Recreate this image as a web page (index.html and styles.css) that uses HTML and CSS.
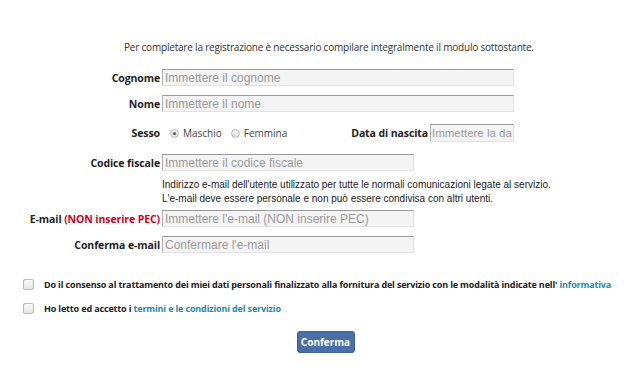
FILE: index.html
```html
<!DOCTYPE html>
<html lang="it">
<head>
<meta charset="utf-8">
<link rel="stylesheet" href="styles.css">
</head>
<body>
<div class="page">
  <p class="intro">Per completare la registrazione è necessario compilare integralmente il modulo sottostante.</p>
  <div class="form">
    <div class="row r-cognome">
      <label class="lbl">Cognome</label>
      <input class="inp w-long" placeholder="Immettere il cognome">
    </div>
    <div class="row r-nome">
      <label class="lbl">Nome</label>
      <input class="inp w-long" placeholder="Immettere il nome">
    </div>
    <div class="row r-sesso">
      <label class="lbl">Sesso</label>
      <div class="sexline">
        <span class="radio checked"></span><span class="rtext">Maschio</span>
        <span class="radio"></span><span class="rtext">Femmina</span>
        <span class="spacer"></span>
        <label class="lbl2">Data di nascita</label>
        <input class="inp w-date" placeholder="Immettere la data di nascita">
      </div>
    </div>
    <div class="row r-cf">
      <label class="lbl">Codice fiscale</label>
      <input class="inp w-mid" placeholder="Immettere il codice fiscale">
    </div>
    <div class="row r-help">
      <span></span>
      <div class="help">Indirizzo e-mail dell'utente utilizzato per tutte le normali comunicazioni legate al servizio.<br>L'e-mail deve essere personale e non può essere condivisa con altri utenti.</div>
    </div>
    <div class="row r-email">
      <label class="lbl">E-mail <span class="red">(NON inserire PEC)</span></label>
      <input class="inp w-mid" placeholder="Immettere l'e-mail (NON inserire PEC)">
    </div>
    <div class="row r-conf">
      <label class="lbl">Conferma e-mail</label>
      <input class="inp w-mid" placeholder="Confermare l'e-mail">
    </div>
  </div>
  <div class="checks">
    <div class="check"><span class="box"></span><span class="ctext">Do il consenso al trattamento dei miei dati personali finalizzato alla fornitura del servizio con le modalità indicate nell' <a class="link">informativa</a></span></div>
    <div class="check"><span class="box"></span><span class="ctext">Ho letto ed accetto i <a class="link">termini e le condizioni del servizio</a></span></div>
  </div>
  <div class="actions"><button class="btn">Conferma</button></div>
</div>
</body>
</html>
```
FILE: styles.css
```css
html, body { margin: 0; padding: 0; background: #fff; }
body { width: 640px; height: 371px; overflow: hidden; font-family: "Open Sans", "Noto Sans", sans-serif; color: #222; }
.page { padding-top: 39px; }
.intro { margin: 0 0 0 124px; font-size: 10px; color: #333; letter-spacing: -0.2px; height: 16px; line-height: 16px; }
.form { margin-top: 14px; display: flex; flex-direction: column; }
.row { display: grid; grid-template-columns: 160px 1fr; column-gap: 2px; align-items: center; }
.lbl { text-align: right; font-weight: 700; font-size: 10.5px; color: #222; white-space: nowrap; letter-spacing: -0.1px; }
.red { color: #d0021b; }
.inp { box-sizing: border-box; height: 17px; padding: 0 2px; margin: 0; font-family: "Liberation Sans", Arial, sans-serif; font-size: 12px; color: #333; background: #f4f4f4; border: 1px solid #e2e2e2; border-top: 1px solid #9a9a9a; border-left: 1px solid #b0b0b0; border-radius: 0; outline: none; }
.inp::placeholder { color: #9a9a9a; }
.w-long { width: 352px; }
.w-mid { width: 252px; }
.w-date { width: 84px; height: 18px; padding: 0 1px; font-size: 11.5px; }
.r-nome { margin-top: 9px; }
.r-sesso { margin-top: 12px; }
.sexline { display: flex; align-items: center; width: 352px; }
.radio { width: 9px; height: 9px; border-radius: 50%; box-sizing: border-box; border: 1px solid #bdbdbd; background: linear-gradient(#f0f0f0, #e0e0e0); margin-left: 8px; position: relative; }
.radio.checked::after { content: ""; position: absolute; left: 2px; top: 2px; width: 3px; height: 3px; border-radius: 50%; background: #555; }
.rtext { font-size: 10px; color: #444; margin-left: 4px; }
.rtext + .radio { margin-left: 9px; }
.spacer { flex: 1; }
.lbl2 { font-weight: 700; font-size: 10.5px; margin-right: 2px; white-space: nowrap; letter-spacing: -0.1px; }
.r-cf { margin-top: 12px; }
.r-help { margin-top: 7px; }
.help { font-family: "Liberation Sans", Arial, sans-serif; font-size: 10px; line-height: 14px; color: #222; }
.r-email { margin-top: 4px; }
.r-conf { margin-top: 9px; }
.checks { margin-top: 24px; padding-left: 23px; display: flex; flex-direction: column; row-gap: 10px; }
.check { display: flex; align-items: center; height: 14px; }
.box { width: 11px; height: 11px; box-sizing: border-box; border: 1px solid #b9b9b9; border-radius: 2px; background: linear-gradient(#f7f7f7, #e6e6e6); margin-right: 10px; flex: none; }
.ctext { font-weight: 700; font-size: 9px; color: #222; white-space: nowrap; letter-spacing: -0.15px; }
.link { color: #1f8aa8; text-decoration: none; }
.actions { margin-top: 16px; display: flex; justify-content: center; }
.btn { margin-left: 11px; width: 58px; height: 22px; background: #4a6ea6; color: #fff; font-family: "Open Sans", sans-serif; font-weight: 700; font-size: 10px; border: 1px solid #3f619a; border-radius: 3px; padding: 0; }
```
